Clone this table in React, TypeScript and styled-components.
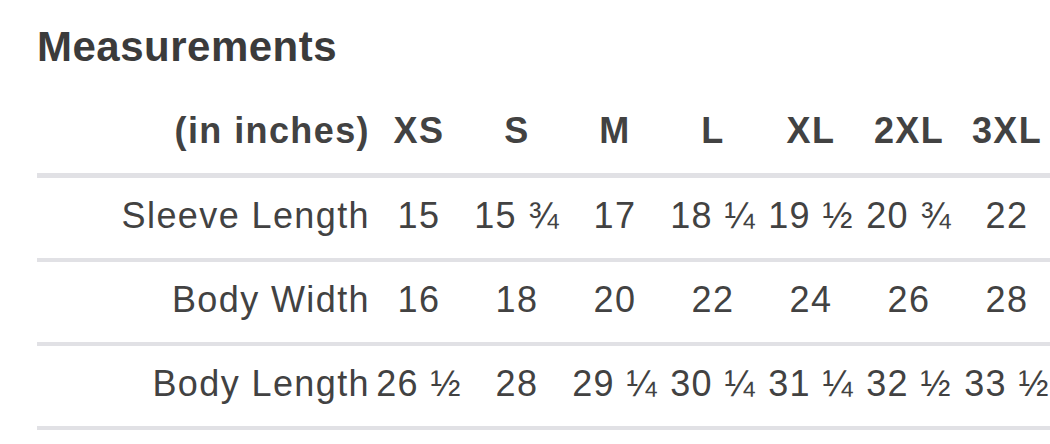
import React from "react";
import styled, { createGlobalStyle } from "styled-components";

const GlobalStyle = createGlobalStyle`
  html, body {
    margin: 0;
    padding: 0;
    background: #fff;
    overflow: hidden;
  }
  body {
    font-family: "Liberation Sans", Arial, sans-serif;
    color: #424242;
  }
`;

const Page = styled.div`
  width: 1050px;
  height: 444px;
  padding: 23px 0 0 37px;
  box-sizing: border-box;
  overflow: hidden;
`;

const Title = styled.h2`
  margin: 0 0 22px;
  font-size: 42px;
  line-height: 48px;
  font-weight: 700;
  letter-spacing: 0.5px;
  color: #3b3b3b;
`;

const Table = styled.div`
  width: 1019px;
  display: flex;
  flex-direction: column;
`;

const Row = styled.div<{ $head?: boolean }>`
  display: grid;
  grid-template-columns: 333px repeat(7, 98px);
  align-items: center;
  height: 80px;
  border-bottom: ${({ $head }) => ($head ? "5px" : "4px")} solid #e1e1e5;
  font-size: 36px;
  font-weight: ${({ $head }) => ($head ? 700 : 400)};
  letter-spacing: 1.4px;
`;

const Label = styled.div`
  text-align: right;
  padding-bottom: 5px;
  white-space: nowrap;
`;

const Cell = styled.div`
  text-align: center;
  padding-bottom: 5px;
  white-space: nowrap;
`;

const sizes = ["XS", "S", "M", "L", "XL", "2XL", "3XL"];

const rows: { label: string; values: string[] }[] = [
  { label: "Sleeve Length", values: ["15", "15 ¾", "17", "18 ¼", "19 ½", "20 ¾", "22"] },
  { label: "Body Width", values: ["16", "18", "20", "22", "24", "26", "28"] },
  { label: "Body Length", values: ["26 ½", "28", "29 ¼", "30 ¼", "31 ¼", "32 ½", "33 ½"] },
];

export default function App() {
  return (
    <>
      <GlobalStyle />
      <Page>
        <Title>Measurements</Title>
        <Table>
          <Row $head>
            <Label>(in inches)</Label>
            {sizes.map((s) => (
              <Cell key={s}>{s}</Cell>
            ))}
          </Row>
          {rows.map((row) => (
            <Row key={row.label}>
              <Label>{row.label}</Label>
              {row.values.map((v, i) => (
                <Cell key={i}>{v}</Cell>
              ))}
            </Row>
          ))}
        </Table>
      </Page>
    </>
  );
}
